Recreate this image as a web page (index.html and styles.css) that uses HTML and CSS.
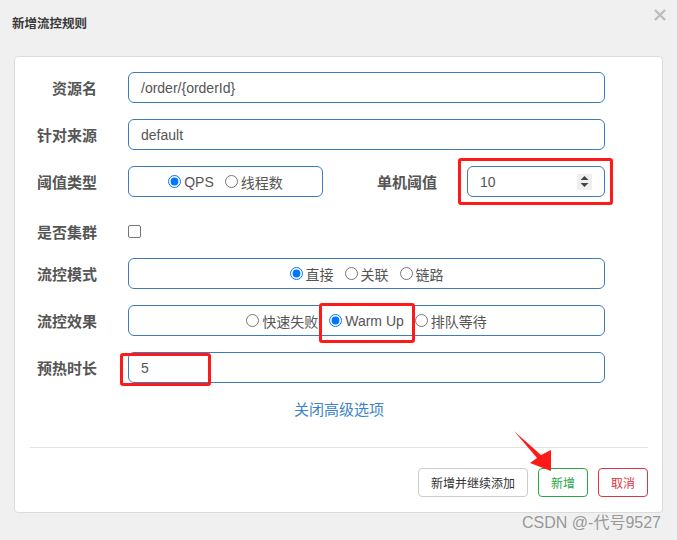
FILE: index.html
```html
<!DOCTYPE html>
<html lang="zh-CN">
<head>
<meta charset="utf-8">
<title>新增流控规则</title>
<link rel="stylesheet" href="styles.css">
</head>
<body>
<div class="dialog">
  <div class="header">
    <h4 class="title">新增流控规则</h4>
    <span class="close">
      <svg width="12" height="12" viewBox="0 0 12 12"><path d="M1 1L11 11M11 1L1 11" stroke="#bdbdbd" stroke-width="2.4"/></svg>
    </span>
  </div>
  <div class="card">
    <div class="form">
      <div class="row">
        <label class="lbl">资源名</label>
        <div class="box input-box">/order/{orderId}</div>
      </div>
      <div class="row">
        <label class="lbl">针对来源</label>
        <div class="box input-box">default</div>
      </div>
      <div class="row">
        <label class="lbl">阈值类型</label>
        <div class="split">
          <div class="box radio-box small">
            <label class="opt"><input type="radio" name="t" checked>QPS</label>
            <label class="opt"><input type="radio" name="t">线程数</label>
          </div>
          <label class="lbl inner-lbl">单机阈值</label>
          <div class="box input-box num">10<span class="spin"><svg width="9" height="15" viewBox="0 0 9 15"><path d="M0.5 6L4.5 2L8.5 6Z M0.5 9L4.5 13L8.5 9Z" fill="#444"/></svg></span></div>
        </div>
      </div>
      <div class="row row-check">
        <label class="lbl">是否集群</label>
        <div><span class="check"></span></div>
      </div>
      <div class="row">
        <label class="lbl">流控模式</label>
        <div class="box radio-box">
          <label class="opt"><input type="radio" name="m" checked>直接</label>
          <label class="opt"><input type="radio" name="m">关联</label>
          <label class="opt"><input type="radio" name="m">链路</label>
        </div>
      </div>
      <div class="row">
        <label class="lbl">流控效果</label>
        <div class="box radio-box">
          <label class="opt"><input type="radio" name="e">快速失败</label>
          <label class="opt"><input type="radio" name="e" checked>Warm Up</label>
          <label class="opt"><input type="radio" name="e">排队等待</label>
        </div>
      </div>
      <div class="row">
        <label class="lbl">预热时长</label>
        <div class="box input-box">5</div>
      </div>
    </div>
    <div class="link-row"><a class="link">关闭高级选项</a></div>
    <div class="divider"></div>
    <div class="footer">
      <button class="btn btn-default">新增并继续添加</button>
      <button class="btn btn-success">新增</button>
      <button class="btn btn-danger">取消</button>
    </div>
  </div>

  <div class="mark mark-1"></div>
  <div class="mark mark-2"></div>
  <div class="mark mark-3"></div>
  <svg class="arrow" width="677" height="540" viewBox="0 0 677 540">
    <polygon points="514,431 541,455 551,450 551,471 530,463 537,458" fill="#ff1a1a"/>
  </svg>
  <div class="watermark">CSDN @-代号9527</div>
</div>
</body>
</html>
```

FILE: styles.css
```css
* { box-sizing: border-box; }
html, body {
  margin: 0;
  padding: 0;
  background: #f0f0f0;
}
body {
  width: 677px;
  height: 540px;
  overflow: hidden;
  font-family: "Liberation Sans", "Noto Sans CJK SC", sans-serif;
  color: #555;
}
.dialog {
  position: relative;
  width: 677px;
  height: 540px;
}
.header {
  height: 56px;
  display: flex;
  align-items: flex-start;
  justify-content: space-between;
  padding: 0 11px 0 12px;
}
.title {
  margin: 15px 0 0 0;
  font-size: 12.5px;
  font-weight: bold;
  color: #3a3a3a;
  line-height: 18px;
}
.close {
  margin-top: 9px;
  display: flex;
}
.card {
  margin-left: 14px;
  width: 649px;
  height: 457px;
  background: #fff;
  border: 1px solid #dcdcdc;
  border-radius: 4px;
  padding: 15px 14px 0 15px;
}
.form {
  display: flex;
  flex-direction: column;
  gap: 16px;
  padding-right: 43px;
}
.row {
  display: grid;
  grid-template-columns: 67px 1fr;
  column-gap: 31px;
  align-items: center;
  height: 31px;
}
.lbl {
  text-align: right;
  font-size: 15px;
  font-weight: bold;
  color: #555;
  white-space: nowrap;
}
.box {
  height: 31px;
  border: 1px solid #3c7cbc;
  border-radius: 6px;
  background: #fff;
  display: flex;
  align-items: center;
}
.input-box {
  padding-left: 12px;
  font-size: 14px;
  color: #555;
}
.split {
  display: flex;
  align-items: center;
}
.radio-box {
  justify-content: center;
  gap: 11px;
  font-size: 14px;
  color: #555;
}
.radio-box.small {
  width: 195px;
  flex: none;
}
.inner-lbl {
  flex: 1;
  padding-right: 30px;
}
.num {
  width: 138px;
  flex: none;
  padding-right: 12px;
  justify-content: space-between;
}
.spin {
  width: 15px;
  height: 16px;
  background: #efefef;
  display: flex;
  align-items: center;
  justify-content: center;
}
.opt {
  display: flex;
  align-items: center;
  white-space: nowrap;
}
.opt input {
  margin: 0 3px 0 0;
  width: 13px;
  height: 13px;
}
.row-check {
  height: 29px;
  padding-top: 8px;
}
.check {
  display: block;
  width: 13px;
  height: 13px;
  border: 1px solid #767676;
  border-radius: 2px;
  background: #fff;
}
.link-row {
  margin-top: 17px;
  height: 20px;
  text-align: center;
  line-height: 20px;
}
.link {
  font-size: 15px;
  color: #3b84c9;
}
.divider {
  margin-top: 27px;
  height: 1px;
  background: #e2e2e2;
}
.footer {
  margin-top: 20px;
  display: flex;
  justify-content: flex-end;
  gap: 10px;
}
.btn {
  height: 29px;
  padding: 0 11px;
  font-size: 12px;
  font-family: "Liberation Sans", "Noto Sans CJK SC", sans-serif;
  background: #fff;
  border: 1px solid #ccc;
  border-radius: 4px;
  color: #333;
}
.btn-success {
  width: 50px;
  border-color: #28a745;
  color: #28a745;
}
.btn-danger {
  width: 50px;
  border-color: #dc3545;
  color: #dc3545;
}
.btn-default {
  width: 110px;
}
.mark {
  position: absolute;
  border: 3px solid #ff1a1a;
  border-radius: 3px;
}
.mark-1 { left: 458px; top: 158px; width: 155px; height: 47px; }
.mark-2 { left: 319px; top: 303px; width: 96px; height: 40px; }
.mark-3 { left: 120px; top: 353px; width: 91px; height: 33px; }
.arrow {
  position: absolute;
  left: 0;
  top: 0;
  pointer-events: none;
}
.watermark {
  position: absolute;
  right: 16px;
  top: 512px;
  font-size: 16px;
  line-height: 22px;
  color: rgba(140, 140, 140, 0.9);
  white-space: nowrap;
}
```
